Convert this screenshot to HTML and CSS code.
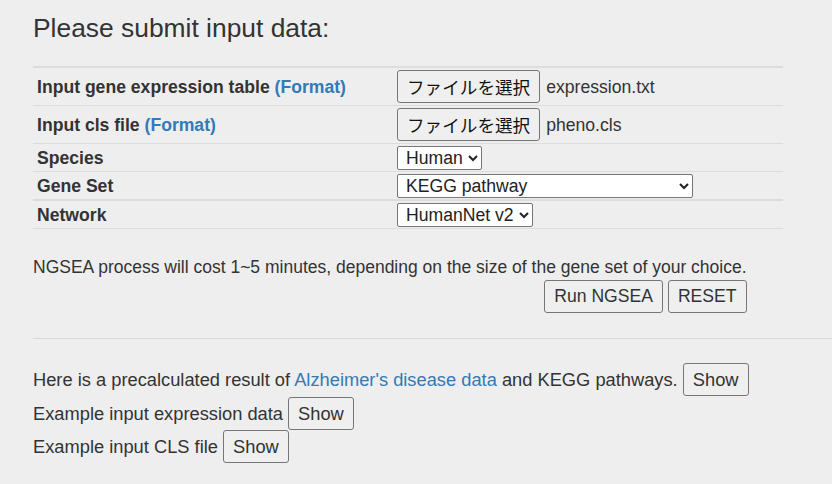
FILE: index.html
```html
<!DOCTYPE html>
<html lang="en">
<head>
  <meta charset="UTF-8" />
  <title>NGSEA | Submit</title>
  <link rel="stylesheet" href="styles.css">
</head>
<body>
  <div class="page">
    <h3>Please submit input data:</h3>

    <form class="submit-form">
      <table class="input-table">
        <tbody>
          <tr class="first">
            <td class="label">Input gene expression table <a href="#">(Format)</a></td>
            <td><button type="button" class="file-btn">ファイルを選択</button><span class="file-name">expression.txt</span></td>
          </tr>
          <tr>
            <td class="label">Input cls file <a href="#">(Format)</a></td>
            <td><button type="button" class="file-btn">ファイルを選択</button><span class="file-name">pheno.cls</span></td>
          </tr>
          <tr class="pick">
            <td class="label">Species</td>
            <td>
              <select class="sel">
                <option>Human</option>
                <option>Mouse</option>
              </select>
            </td>
          </tr>
          <tr class="pick">
            <td class="label">Gene Set</td>
            <td>
              <select class="sel sel-wide">
                <option>KEGG pathway</option>
                <option>GO biological process</option>
              </select>
            </td>
          </tr>
        </tbody>
        <tbody>
          <tr class="pick">
            <td class="label">Network</td>
            <td>
              <select class="sel">
                <option>HumanNet v2</option>
                <option>STRING</option>
              </select>
            </td>
          </tr>
        </tbody>
      </table>

      <div class="run-box">
        <p class="note">NGSEA process will cost 1~5 minutes, depending on the size of the gene set of your choice.</p>
        <div class="actions">
          <button type="button" class="btn">Run NGSEA</button>
          <button type="reset" class="btn">RESET</button>
        </div>
      </div>
    </form>

    <hr>

    <div class="examples">
      <div class="line">Here is a precalculated result of <a href="#">Alzheimer's disease data</a> and KEGG pathways. <button type="button" class="btn">Show</button></div>
      <div class="line">Example input expression data <button type="button" class="btn">Show</button></div>
      <div class="line">Example input CLS file <button type="button" class="btn">Show</button></div>
    </div>
  </div>
</body>
</html>
```

FILE: styles.css
```css
body {
  margin: 0;
  background: #eee;
  color: #333;
  font-family: 'Liberation Sans', Arial, Helvetica, sans-serif;
  font-size: 17.6px;
  line-height: 1.42857;
  overflow-x: hidden;
}
a {
  color: #337ab7;
  text-decoration: none;
}
.page {
  padding-left: 33px;
}
h3 {
  font-size: 26.4px;
  font-weight: 500;
  line-height: 1.1;
  margin: 14px 0 23px 0;
}
.input-table {
  width: 750px;
  border-collapse: collapse;
}
.input-table td {
  padding: 2px 4px;
  border-top: 1px solid #ddd;
  vertical-align: middle;
  line-height: 22px;
}
.input-table tr.pick td {
  padding: 2px 4px 1px 4px;
  line-height: 20px;
}
.input-table tbody:last-child tr:last-child td {
  border-bottom: 1px solid #ddd;
}
.input-table tbody + tbody td {
  border-top: 2px solid #ddd;
}
.input-table tr.first td {
  border-top: 2px solid #ddd;
}
.input-table td.label {
  width: 352px;
  font-weight: 700;
}
.btn,
.file-btn {
  font-family: inherit;
  font-size: inherit;
  line-height: 21px;
  color: #333;
  background: #efefef;
  border: 1px solid #767676;
  border-radius: 3px;
  padding: 5px 9px;
  cursor: pointer;
  vertical-align: middle;
}
.file-btn {
  font-family: 'Noto Sans CJK JP', sans-serif;
  font-size: 17.6px;
  color: #111;
  height: 33px;
}
.file-name {
  margin-left: 6px;
  vertical-align: middle;
}
.sel {
  display: block;
  font-family: inherit;
  font-size: 17.6px;
  color: #222;
  background: #fff;
  border: 1px solid #767676;
  border-radius: 2px;
  height: 24px;
  padding: 0 2px 0 4px;
}
.sel-wide {
  width: 296px;
}
.run-box {
  display: inline-block;
  margin-top: 26px;
}
.note {
  margin: 0;
  font-size: 17.5px;
}
.actions {
  text-align: right;
}
hr {
  border: 0;
  border-top: 1px solid #d8d8d8;
  margin: 25px 0 24px 0;
}
.examples {
  font-size: 18.3px;
}
.line {
  height: 33.5px;
  line-height: 33px;
}
.examples .btn {
  height: 33px;
  padding: 5px 9px;
  vertical-align: 0;
}
```
